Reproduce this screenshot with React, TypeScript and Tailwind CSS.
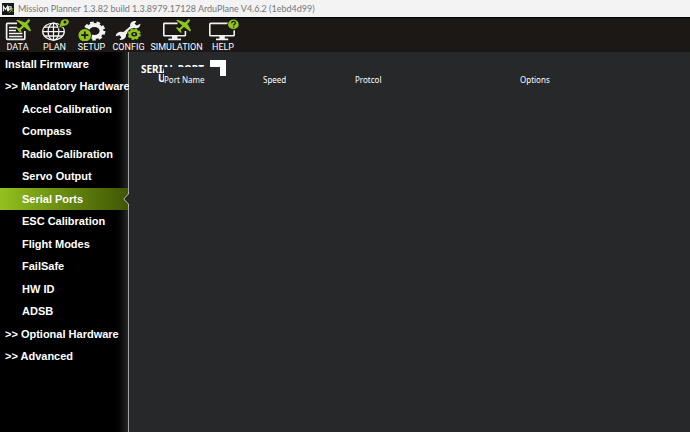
import clsx from 'clsx';
import type { ReactNode } from 'react';

const Plane = ({ x }: { x: number }) => (
    <g transform={`translate(${x} 0)`} fill="#8fc31f">
        {/* fuselage, wings, tail */}
        <path d="M13.6 0.6Q14.6 1.6 13 3.2L3.4 12.2L2 10.8L11.2 1.4Q12.6 -0.2 13.6 0.6Z" />
        <path d="M0.2 1.6L1.6 0.8L9.8 3.8L12.2 6L15 11.4L14 12.6L6.6 6.8Z" />
        <path d="M0 8.8L1 8.2L4.4 9.8L5.6 13.2L4.8 14L2.6 12Z" />
    </g>
);

const DataIcon = () => (
    <svg width="35" height="22" viewBox="0 0 35 22" aria-hidden="true">
        <path d="M17 4.4H7.4q-.8 0-.8.8v14.4q0 .8.8.8H24q.8 0 .8-.8V12" fill="none" stroke="#f2f2f2" strokeWidth="1.7" />
        <path d="M9 8.4h8M9 11.6h7M9 14.6h13.4M9 17.6h13.4" stroke="#f2f2f2" strokeWidth="1.5" />
        <Plane x={16} />
    </svg>
);

const PlanIcon = () => (
    <svg width="35" height="22" viewBox="0 0 35 22" aria-hidden="true">
        <g fill="none" stroke="#f2f2f2" strokeWidth="1.3">
            <ellipse cx="16.5" cy="12.6" rx="10.8" ry="8.5" />
            <ellipse cx="16.5" cy="12.6" rx="5.4" ry="8.5" />
            <path d="M16.5 4v17M5.7 12.6h21.6M7.5 8.2h18M7.5 17h18" />
        </g>
        <path d="M21 9.5l2.4-7.2a5 4.2 0 1 1 5 5.2z" fill="#1b1815" />
        <path d="M22.3 8.6L24 2.6C25 -0.4 31.6 -0.8 31.8 2.6C32 5.6 28.4 7 26 7Z" fill="#8fc31f" />
        <circle cx="28" cy="2.9" r="1.5" fill="#1b1815" />
    </svg>
);

const SetupIcon = () => (
    <svg width="35" height="22" viewBox="0 0 35 22" aria-hidden="true">
        <ellipse cx="20.4" cy="12" rx="7.2" ry="6" fill="none" stroke="#f2f2f2" strokeWidth="4" />
        <ellipse cx="20.4" cy="12" rx="9.8" ry="8.4" fill="none" stroke="#f2f2f2" strokeWidth="2.4" strokeDasharray="3.6 2.8" />
        <circle cx="10.8" cy="16.2" r="7.2" fill="#1b1815" />
        <circle cx="10.8" cy="16.2" r="6.3" fill="#8fc31f" />
        <path d="M10.8 12.6v7.2M7.2 16.2h7.2" stroke="#1b1815" strokeWidth="1.7" />
    </svg>
);

const ConfigIcon = () => (
    <svg width="35" height="22" viewBox="0 0 35 22" aria-hidden="true">
        <path
            d="M25.4 2.2C22 1.2 18.4 3.6 19.2 7.2L12.2 13.2C8.6 12 5 14 4.8 17.2L8.4 16.2L10.4 18.2L8.4 20.8C12.4 21.4 15.6 19 15 15.6L22 9.8C25.8 10.6 29.6 8.4 29.4 4.8L25.8 6.4L23.6 4.8Z"
            fill="#f2f2f2"
        />
        <ellipse cx="23.2" cy="15.2" rx="7.2" ry="6.2" fill="#1b1815" />
        <ellipse cx="23.2" cy="15.2" rx="4.3" ry="3.6" fill="none" stroke="#8fc31f" strokeWidth="2.8" />
        <ellipse cx="23.2" cy="15.2" rx="6" ry="5.2" fill="none" stroke="#8fc31f" strokeWidth="1.3" strokeDasharray="2.5 1.9" />
        <circle cx="23.2" cy="15.2" r="1.1" fill="#8fc31f" />
    </svg>
);

const SimulationIcon = () => (
    <svg width="57" height="22" viewBox="0 0 57 22" aria-hidden="true">
        <path d="M29.5 4.4H16.4q-.6 0-.6.6v11.2q0 .6.6.6h20.4q.6 0 .6-.6V12" fill="none" stroke="#f2f2f2" strokeWidth="1.6" />
        <path d="M24 17h5.4v2.6H33v1.6H20.4v-1.6H24z" fill="#f2f2f2" />
        <Plane x={28} />
    </svg>
);

const HelpIcon = () => (
    <svg width="32" height="22" viewBox="0 0 32 22" aria-hidden="true">
        <rect x="2.8" y="4.4" width="24.4" height="12.4" rx="0.8" fill="none" stroke="#f2f2f2" strokeWidth="1.6" />
        <path d="M12.4 17h5.4v2.6h3.4v1.6H9v-1.6h3.4z" fill="#f2f2f2" />
        <ellipse cx="26.4" cy="5.6" rx="6.2" ry="5.8" fill="#1b1815" />
        <ellipse cx="26.4" cy="5.4" rx="5.3" ry="4.9" fill="#8fc31f" />
        <path d="M24.6 4.2c0-2.4 3.8-2.3 3.8-.2 0 1.4-1.8 1.3-1.8 2.6M26.6 7.5v1.3" fill="none" stroke="#1b1815" strokeWidth="1.2" />
    </svg>
);

const LogoIcon = () => (
    <svg width="12" height="12" viewBox="0 0 13 13" aria-hidden="true">
        <rect width="13" height="13" fill="#171717" />
        <path d="M1.5 9V3.5L3.8 7L6 3.5V9M7.2 9V4h2.6v2.6H7.2" fill="none" stroke="#f2f2f2" strokeWidth="1.2" />
        <path d="M8 10.5L12 5.5M9 6.5l3 3" stroke="#8fc31f" strokeWidth="1" />
    </svg>
);

const toolbarItems: { label: string; icon: ReactNode; width: string }[] = [
    { label: 'DATA', icon: <DataIcon />, width: 'w-[35px]' },
    { label: 'PLAN', icon: <PlanIcon />, width: 'w-[35px]' },
    { label: 'SETUP', icon: <SetupIcon />, width: 'w-[35px]' },
    { label: 'CONFIG', icon: <ConfigIcon />, width: 'w-[35px]' },
    { label: 'SIMULATION', icon: <SimulationIcon />, width: 'w-[57px]' },
    { label: 'HELP', icon: <HelpIcon />, width: 'w-8' },
];

const menuItems = [
    { label: 'Install Firmware', group: true },
    { label: '>> Mandatory Hardware', group: true },
    { label: 'Accel Calibration' },
    { label: 'Compass' },
    { label: 'Radio Calibration' },
    { label: 'Servo Output' },
    { label: 'Serial Ports', active: true },
    { label: 'ESC Calibration' },
    { label: 'Flight Modes' },
    { label: 'FailSafe' },
    { label: 'HW ID' },
    { label: 'ADSB' },
    { label: '>> Optional Hardware', group: true },
    { label: '>> Advanced', group: true },
];

const Sidebar = () => (
    <nav className="w-[129px] shrink-0 border-r border-[#a3a3a3] bg-linear-to-r from-black from-88% to-[#262829] pt-px font-['Liberation_Sans',Arial,sans-serif] text-[11px] font-bold text-white">
        {menuItems.map((item) => (
            <button
                key={item.label}
                type="button"
                aria-current={item.active ? 'page' : undefined}
                className={clsx(
                    'relative flex h-[22px] w-full items-center text-left whitespace-nowrap even:h-[23px]',
                    item.group ? 'pl-[5px]' : 'pl-[22px]',
                    item.active && 'bg-linear-to-r from-[#94c11f] to-[#405704]'
                )}
            >
                {item.label}
                {item.active && (
                    <svg className="absolute top-1 -right-px" width="6" height="14" viewBox="0 0 6 14" aria-hidden="true">
                        <path d="M6 1.5L0.8 7L6 12.5Z" fill="#262829" />
                        <path d="M5.5 0V1.8L0.8 7L5.5 12.2V14" fill="none" stroke="#b5b5b5" />
                    </svg>
                )}
            </button>
        ))}
    </nav>
);

const SerialPorts = () => (
    <main className="relative min-w-0 flex-1 bg-[#262829] pt-[13px] pl-3 text-white">
        <h1 className="font-['Noto_Sans',sans-serif] text-[10px] leading-[9px] font-bold whitespace-nowrap">
            SERIAL PORT
            <span className="block pl-[17px]">U</span>
        </h1>
        {/* corner of the control that sits behind the table */}
        <div className="absolute top-2 left-[81px] size-4 bg-white" />
        <div className="absolute top-[15px] left-[35px] w-14 bg-[#262829]">
            <table className="w-[480px] table-fixed text-left font-['Noto_Sans',sans-serif] text-[8px] leading-[10px]">
                <thead>
                    <tr>
                        <th className="w-[99px] pt-2 font-normal">Port Name</th>
                        <th className="w-[92px] pt-2 font-normal">Speed</th>
                        <th className="w-[165px] pt-2 font-normal">Protcol</th>
                        <th className="pt-2 font-normal">Options</th>
                    </tr>
                </thead>
            </table>
        </div>
    </main>
);

const App = () => {
    return (
        <div className="flex min-h-screen flex-col bg-[#262829]">
            <header>
                <div className="flex h-[17px] items-center gap-1 bg-[#f3f3f3] pl-0.5 font-['Lato',sans-serif] text-[9px] text-[#777777]">
                    <LogoIcon />
                    <span>Mission Planner 1.3.82 build 1.3.8979.17128 ArduPlane V4.6.2 (1ebd4d99)</span>
                </div>
                <div className="flex h-[35px] items-start gap-0.5 border-t border-black bg-[#1b1815] pt-px">
                    {toolbarItems.map((item) => (
                        <button
                            key={item.label}
                            type="button"
                            className={clsx(
                                "flex flex-col items-center font-['Roboto',sans-serif] text-[9px] leading-[13px] text-white",
                                item.width
                            )}
                        >
                            {item.icon}
                            {item.label}
                        </button>
                    ))}
                </div>
            </header>
            <div className="flex flex-1">
                <Sidebar />
                <SerialPorts />
            </div>
        </div>
    );
};

export default App;
